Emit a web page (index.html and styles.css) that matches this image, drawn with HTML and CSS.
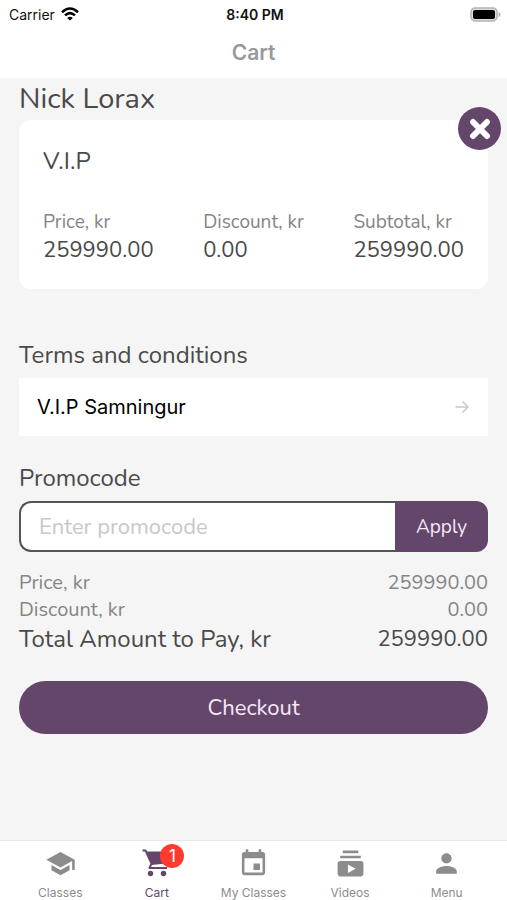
FILE: index.html
```html
<!DOCTYPE html>
<html lang="en">
<head>
<meta charset="utf-8">
<meta name="viewport" content="width=device-width, initial-scale=1">
<title>Cart</title>
<link rel="stylesheet" href="styles.css">
</head>
<body>
<div class="app">
  <header class="top">
    <div class="status">
      <div class="carrier">
        <span>Carrier</span>
        <svg width="18" height="14" viewBox="0 0 18 14" fill="none" stroke="#000" stroke-width="2.6" aria-hidden="true">
          <path d="M1 5.2Q9-2.2 17 5.2"/>
          <path d="M4 8.4Q9 3.8 14 8.4"/>
          <path d="M9 13.6L6.2 10.9Q9 8.6 11.8 10.9Z" fill="#000" stroke="none"/>
        </svg>
      </div>
      <time class="clock">8:40 PM</time>
      <svg class="battery" width="31" height="15" viewBox="0 0 31 15" aria-hidden="true">
        <rect x="1" y="1" width="26" height="13" rx="4" fill="#ddd" stroke="#b4b4b4" stroke-width="1.5"/>
        <rect x="3" y="3" width="22" height="9" rx="2" fill="#000"/>
        <path d="M28.500 5Q30.500 5.500 30.500 7.500T28.500 10Z" fill="#b4b4b4"/>
      </svg>
    </div>
    <h1 class="title">Cart</h1>
  </header>

  <main class="content">
    <h2 class="customer">Nick Lorax</h2>
    <section class="card">
      <button class="remove" type="button" aria-label="Remove item">
        <svg width="22" height="22" viewBox="0 0 22 22" stroke="#fff" stroke-width="6" stroke-linecap="round" aria-hidden="true">
          <path d="M4 4L18 18M18 4L4 18"/>
        </svg>
      </button>
      <h3 class="item">V.I.P</h3>
      <dl class="figures">
        <div><dt>Price, kr</dt><dd>259990.00</dd></div>
        <div><dt>Discount, kr</dt><dd>0.00</dd></div>
        <div><dt>Subtotal, kr</dt><dd>259990.00</dd></div>
      </dl>
    </section>

    <h2 class="heading">Terms and conditions</h2>
    <a class="terms" href="#terms">
      <span>V.I.P Samningur</span>
      <svg width="14" height="14" viewBox="0 0 14 14" fill="none" stroke="#c9c9c9" stroke-width="1.500" aria-hidden="true">
        <path d="M0.500 7H13M7.500 1.500L13 7L7.500 12.500"/>
      </svg>
    </a>

    <label class="heading" for="promo">Promocode</label>
    <form class="promo">
      <input id="promo" type="text" placeholder="Enter promocode">
      <button type="button">Apply</button>
    </form>

    <dl class="totals">
      <div><dt>Price, kr</dt><dd>259990.00</dd></div>
      <div><dt>Discount, kr</dt><dd>0.00</dd></div>
      <div class="total"><dt>Total Amount to Pay, kr</dt><dd>259990.00</dd></div>
    </dl>
    <button class="checkout" type="button">Checkout</button>
  </main>

  <nav class="tabs">
    <a href="#classes">
      <svg viewBox="0 0 24 24" aria-hidden="true"><path d="M5 13.180v4L12 21l7-3.820v-4L12 17l-7-3.820zM12 3L1 9l11 6 9-4.910V17h2V9L12 3z"/></svg>
      <span>Classes</span>
    </a>
    <a class="active" href="#cart" aria-current="page">
      <span class="icon">
        <svg viewBox="0 0 31 31" aria-hidden="true">
          <path d="M6 3.500H28L25 15.500L10.500 17Z"/>
          <path d="M1.500 2.500H4.500L10.500 15.500L8.500 20H26" fill="none" stroke="currentColor" stroke-width="2" stroke-linejoin="round"/>
          <circle cx="9.500" cy="25.500" r="2.700"/>
          <circle cx="22.500" cy="25.500" r="2.700"/>
        </svg>
        <span class="badge">1</span>
      </span>
      <span>Cart</span>
    </a>
    <a href="#my-classes">
      <svg viewBox="0 0 24 24" aria-hidden="true"><path d="M17 12h-5v5h5v-5zM16 1v2H8V1H6v2H5c-1.110 0-1.990.9-1.990 2L3 19c0 1.100.89 2 2 2h14c1.100 0 2-.9 2-2V5c0-1.100-.9-2-2-2h-1V1h-2zm3 18H5V8h14v11z"/></svg>
      <span>My Classes</span>
    </a>
    <a href="#videos">
      <svg viewBox="0 0 24 24" aria-hidden="true"><path d="M20 8H4V6h16v2zm-2-6H6v2h12V2zm4 10v8c0 1.100-.9 2-2 2H4c-1.100 0-2-.9-2-2v-8c0-1.100.9-2 2-2h16c1.100 0 2 .9 2 2zm-6 4l-6-3.270v6.530L16 16z"/></svg>
      <span>Videos</span>
    </a>
    <a href="#menu">
      <svg viewBox="0 0 24 24" aria-hidden="true"><path d="M12 12c2.210 0 4-1.790 4-4s-1.790-4-4-4-4 1.790-4 4 1.790 4 4 4zm0 2c-2.670 0-8 1.340-8 4v2h16v-2c0-2.660-5.330-4-8-4z"/></svg>
      <span>Menu</span>
    </a>
  </nav>
</div>
</body>
</html>
```
FILE: styles.css
```css
* {
  box-sizing: border-box;
}

body,
h1,
h2,
h3,
dl,
dd {
  margin: 0;
}

body {
  background: #f5f5f5;
  color: #4a4a4a;
  font-family: Nunito, "Noto Sans", sans-serif;
}

h1,
h2,
h3 {
  font-weight: 400;
}

button,
input {
  font: inherit;
  border: 0;
}

button {
  padding: 0;
  background: #64466b;
  color: #f8e8fa;
  cursor: pointer;
}

a {
  color: inherit;
  text-decoration: none;
}

svg {
  display: block;
}

.app {
  display: flex;
  flex-direction: column;
  min-height: 100vh;
}

.top {
  background: #fff;
  padding-bottom: 5px;
}

.status {
  display: grid;
  grid-template-columns: 1fr auto 1fr;
  align-items: center;
  height: 28px;
  padding: 0 6px 0 9px;
  color: #111;
  font: 14px Inter, sans-serif;
}

.carrier {
  display: flex;
  align-items: center;
  gap: 6px;
}

.clock {
  font-weight: 600;
}

.battery {
  justify-self: end;
}

.title {
  padding-top: 5px;
  color: #999;
  font-family: Inter, sans-serif;
  font-size: 21px;
  font-weight: 600;
  line-height: 40px;
  text-align: center;
}

.content {
  flex: 1;
  padding: 0 19px 24px;
}

.customer {
  font-size: 29px;
  line-height: 42px;
}

.card {
  position: relative;
  padding: 25px 24px;
  border-radius: 12px;
  background: #fff;
}

.remove {
  position: absolute;
  top: -13px;
  right: -13px;
  display: grid;
  place-items: center;
  width: 43px;
  height: 43px;
  border-radius: 50%;
}

.item {
  margin-bottom: 31px;
  font-size: 24px;
  line-height: 32px;
}

.figures {
  display: flex;
  justify-content: space-between;
}

.figures dt {
  color: #858585;
  font-size: 19px;
  line-height: 28px;
}

.figures dd {
  font-size: 22px;
  line-height: 28px;
}

.heading {
  display: block;
  font-size: 24px;
  line-height: 32px;
  margin-bottom: 7px;
}

.card + .heading {
  margin-top: 50px;
}

.terms {
  display: flex;
  align-items: center;
  justify-content: space-between;
  height: 58px;
  margin-bottom: 26px;
  padding: 0 19px 0 18px;
  background: #fff;
  color: #000;
  font: 20px Inter, sans-serif;
}

.promo {
  display: flex;
  height: 51px;
  margin-bottom: 17px;
}

.promo input {
  flex: 1;
  min-width: 0;
  padding: 0 18px;
  border: 2px solid #555;
  border-right: 0;
  border-radius: 12px 0 0 12px;
  background: #fff;
  color: #4a4a4a;
  font-size: 22px;
}

.promo input::placeholder {
  color: #c8c8c8;
  opacity: 1;
}

.promo button {
  width: 93px;
  border-radius: 0 12px 12px 0;
  font-size: 19px;
}

.totals {
  margin-bottom: 26px;
  color: #858585;
  font-size: 20px;
  line-height: 27px;
}

.totals div {
  display: flex;
  justify-content: space-between;
}

.totals .total {
  color: #4a4a4a;
  font-size: 24px;
  line-height: 32px;
}

.totals .total dd {
  font-size: 22px;
}

.checkout {
  display: block;
  width: 100%;
  height: 53px;
  border-radius: 27px;
  font-size: 22px;
}

.tabs {
  display: grid;
  grid-template-columns: repeat(5, 1fr);
  height: 60px;
  padding: 7px 12px 0;
  border-top: 1px solid #e8e8e8;
  background: #fff;
  color: #8c8c8c;
  font: 12px/16px Inter, sans-serif;
}

.tabs a {
  display: flex;
  flex-direction: column;
  align-items: center;
  gap: 6px;
}

.tabs svg {
  width: 31px;
  height: 31px;
  fill: currentColor;
}

.tabs .active {
  color: #64466b;
}

.icon {
  position: relative;
}

.badge {
  position: absolute;
  top: -4px;
  right: -12px;
  width: 24px;
  height: 24px;
  border-radius: 50%;
  background: #ff3b30;
  color: #fff;
  font-size: 17px;
  line-height: 24px;
  text-align: center;
}
```
